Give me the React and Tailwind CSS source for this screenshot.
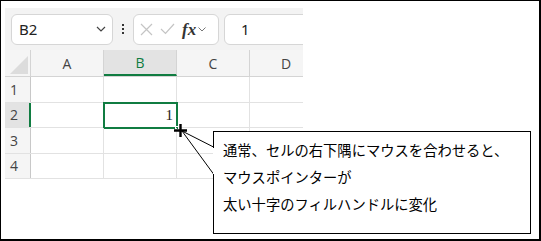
import React from 'react';

const cols = ['A', 'B', 'C', 'D'];
const rows = [1, 2, 3, 4];

const App = () => {
    return (
        <div className="relative w-[541px] h-[241px] bg-white border-t border-l border-r-2 border-b-2 border-black overflow-hidden font-['Open_Sans','Noto_Sans',sans-serif]">
            <div className="pl-[4px] pt-[7px]">
                {/* Excel clip */}
                <div className="w-[298px] overflow-hidden">
                    {/* Toolbar */}
                    <div className="h-[42px] bg-[#f3f3f3] flex items-center pl-[6px] gap-[0px]">
                        <div className="w-[102px] h-[31px] shrink-0 bg-white border border-[#d6d6d6] rounded-[6px] flex items-center justify-between pl-[7px] pr-[6px]">
                            <span className="text-[15px] text-[#222] font-['Noto_Sans',sans-serif]">B2</span>
                            <svg width="10" height="6" viewBox="0 0 10 6" fill="none" stroke="#444" strokeWidth="1.2">
                                <path d="M1 1l4 4 4-4" />
                            </svg>
                        </div>
                        <div className="w-[20px] shrink-0 flex flex-col items-center gap-[2px]">
                            <span className="w-[2px] h-[2px] bg-[#333]" />
                            <span className="w-[2px] h-[2px] bg-[#333]" />
                            <span className="w-[2px] h-[2px] bg-[#333]" />
                        </div>
                        <div className="w-[86px] h-[31px] shrink-0 bg-white border border-[#d6d6d6] rounded-[6px] flex items-center pl-[6px] gap-[7px]">
                            <svg width="13" height="13" viewBox="0 0 13 13" stroke="#c4c4c4" strokeWidth="1.2">
                                <path d="M1 1l11 11M12 1L1 12" />
                            </svg>
                            <svg width="15" height="12" viewBox="0 0 15 12" fill="none" stroke="#c4c4c4" strokeWidth="1.2">
                                <path d="M1 6l4.5 4.5L14 1" />
                            </svg>
                            <div className="flex items-center gap-[2px]">
                                <span className="text-[17px] italic font-bold text-[#333] font-['Liberation_Serif',serif] leading-none">fx</span>
                                <svg width="8" height="5" viewBox="0 0 8 5" fill="none" stroke="#777" strokeWidth="1">
                                    <path d="M0.5 0.5l3.5 3.5 3.5-3.5" />
                                </svg>
                            </div>
                        </div>
                        <div className="ml-[5px] w-[120px] h-[31px] shrink-0 bg-white border border-[#d6d6d6] rounded-[6px] flex items-center pl-[16px]">
                            <span className="text-[15px] text-[#222] font-['Noto_Sans',sans-serif]">1</span>
                        </div>
                    </div>

                    {/* Column headers */}
                    <div className="flex h-[27px] bg-[#f5f5f5] border-b border-[#d4d4d4]">
                        <div className="w-[26px] shrink-0 border-r border-[#d4d4d4] flex items-end justify-end p-[2px]">
                            <svg width="18" height="18" viewBox="0 0 18 18">
                                <path d="M18 0V18H0Z" fill="#dcdcdc" />
                            </svg>
                        </div>
                        {cols.map((c) => (
                            <div
                                key={c}
                                className={
                                    c === 'B'
                                        ? 'w-[73px] shrink-0 flex items-center justify-center text-[14px] text-[#107c41] bg-[#e3e3e3] border-b-2 border-[#107c41] border-r border-r-[#d4d4d4]'
                                        : 'w-[73px] shrink-0 flex items-center justify-center text-[14px] text-[#444] border-r border-[#d4d4d4]'
                                }
                            >
                                {c}
                            </div>
                        ))}
                    </div>

                    {/* Rows */}
                    {rows.map((r) => (
                        <div key={r} className="flex h-[25.5px] border-b border-[#e2e2e2]">
                            <div
                                className={
                                    r === 2
                                        ? 'w-[26px] shrink-0 bg-[#e3e3e3] border-r-2 border-[#107c41] flex items-center pl-[5px] text-[14px] text-[#444]'
                                        : 'w-[26px] shrink-0 bg-[#f5f5f5] border-r border-[#c8c8c8] flex items-center pl-[5px] text-[14px] text-[#444]'
                                }
                            >
                                {r}
                            </div>
                            {cols.map((c) => (
                                <div key={c} className="w-[73px] shrink-0 border-r border-[#e2e2e2] relative">
                                    {r === 2 && c === 'B' && (
                                        <div className="absolute -left-[1px] -top-[1px] w-[75px] h-[27px] border-2 border-[#107c41] flex items-center justify-end pr-[3px] text-[15px] text-[#222] font-['Liberation_Serif',serif]">
                                            1
                                            <span className="absolute -right-[3px] -bottom-[3px] w-[4px] h-[4px] bg-[#107c41] border border-white" />
                                        </div>
                                    )}
                                </div>
                            ))}
                        </div>
                    ))}
                </div>
            </div>

            {/* Fill-handle cursor */}
            <svg className="absolute left-[173px] top-[123px]" width="13" height="13" viewBox="0 0 13 13">
                <path d="M6.5 0V13M0 6.5H13" stroke="#000" strokeWidth="2.4" />
            </svg>

            {/* Callout tail */}
            <svg className="absolute left-0 top-0" width="541" height="241" viewBox="0 0 541 241" fill="none">
                <path d="M181 130L212.5 146M181 130L212.5 173" stroke="#000" strokeWidth="1" />
            </svg>

            {/* Callout */}
            <div className="absolute left-[212px] top-[130px] w-[318px] h-[103px] border border-black bg-white pl-[9px] pt-[4px] text-[14.3px] leading-[27px] text-black font-['Noto_Sans_CJK_JP',sans-serif]">
                <p>通常、セルの右下隅にマウスを合わせると、</p>
                <p>マウスポインターが</p>
                <p>太い十字のフィルハンドルに変化</p>
            </div>
            {/* gap in the callout's left edge for the tail */}
            <div className="absolute left-[212px] top-[147px] w-[1px] h-[26px] bg-white" />
        </div>
    );
};

export default App;
